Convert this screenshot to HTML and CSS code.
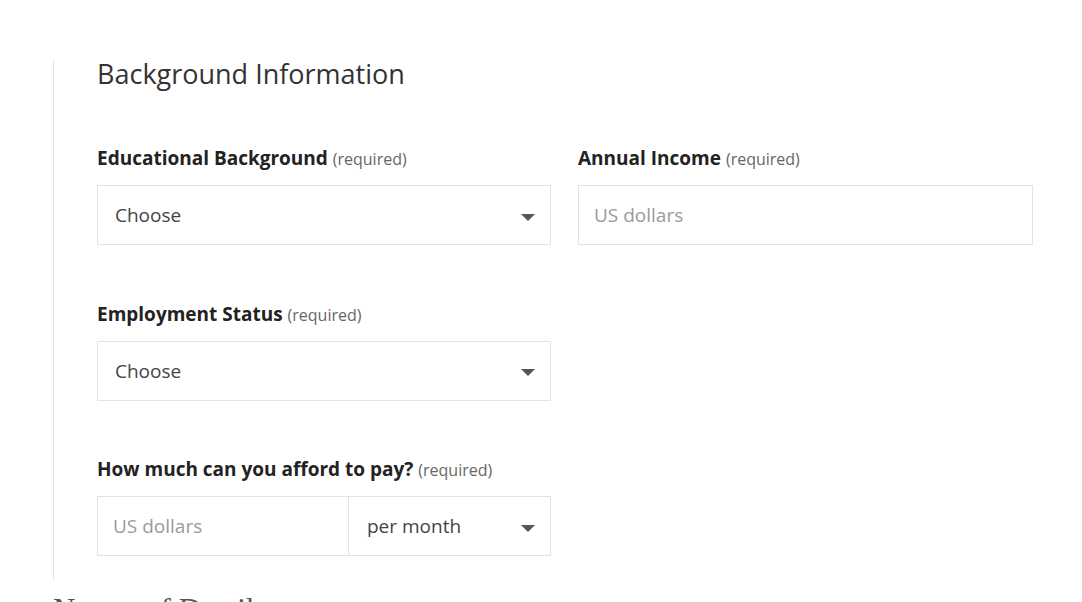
FILE: index.html
```html
<!DOCTYPE html>
<html lang="en">
<head>
<meta charset="utf-8">
<title>Background Information</title>
<link rel="stylesheet" href="styles.css">
</head>
<body>
<div class="page">
  <section class="panel">
    <h2 class="title">Background Information</h2>
    <div class="grid">
      <div class="field">
        <label class="label">Educational Background <span class="req">(required)</span></label>
        <div class="box select"><span class="value">Choose</span><span class="caret"></span></div>
      </div>
      <div class="field">
        <label class="label">Annual Income <span class="req">(required)</span></label>
        <div class="box"><span class="placeholder">US dollars</span></div>
      </div>
      <div class="field">
        <label class="label">Employment Status <span class="req">(required)</span></label>
        <div class="box select"><span class="value">Choose</span><span class="caret"></span></div>
      </div>
      <div class="field empty"></div>
      <div class="field">
        <label class="label">How much can you afford to pay? <span class="req">(required)</span></label>
        <div class="split">
          <div class="box part-left"><span class="placeholder">US dollars</span></div>
          <div class="box select part-right"><span class="value">per month</span><span class="caret"></span></div>
        </div>
      </div>
    </div>
  </section>
  <h2 class="next">Nature of Details</h2>
</div>
</body>
</html>
```
FILE: styles.css
```css
* { box-sizing: border-box; }
html, body { margin: 0; padding: 0; background: #fff; }
body { font-family: "Open Sans", "Liberation Sans", sans-serif; color: #333; }
.page { padding: 60px 0 0 53px; }
.panel {
  border-left: 1px solid #e3e3e3;
  padding: 0 0 24px 43px;
  width: 981px;
}
.title {
  margin: 0;
  font-size: 27px;
  font-weight: 400;
  line-height: 28px;
  color: #333;
}
.grid {
  margin-top: 58px;
  display: grid;
  grid-template-columns: 454px 455px;
  column-gap: 27px;
  row-gap: 56.5px;
}
.label {
  display: block;
  height: 24px;
  font-weight: 700;
  font-size: 19px;
  line-height: 24px;
  color: #222;
  margin-bottom: 15px;
  white-space: nowrap;
}
.req {
  font-weight: 400;
  font-size: 16px;
  line-height: 1;
  color: #666;
}
.box {
  height: 60px;
  border: 1px solid #e2e2e2;
  display: flex;
  align-items: center;
  padding: 0 17px;
  font-size: 19px;
}
.select { justify-content: space-between; padding-right: 15px; }
.value { color: #444; }
.placeholder { color: #9a9a9a; }
.field > .box:not(.select) { padding-left: 15px; }
.caret {
  width: 0; height: 0;
  border-left: 7px solid transparent;
  border-right: 7px solid transparent;
  border-top: 7px solid #555;
  margin-top: 4px;
}
.split { display: flex; }
.part-left { width: 252px; padding-left: 15px; }
.part-right { flex: 1; border-left: none; padding-left: 18px; }
.next {
  margin: 15px 0 0 0;
  font-family: "Liberation Serif", serif;
  font-weight: 400;
  font-size: 31px;
  color: #555;
  line-height: 30px;
}
```
